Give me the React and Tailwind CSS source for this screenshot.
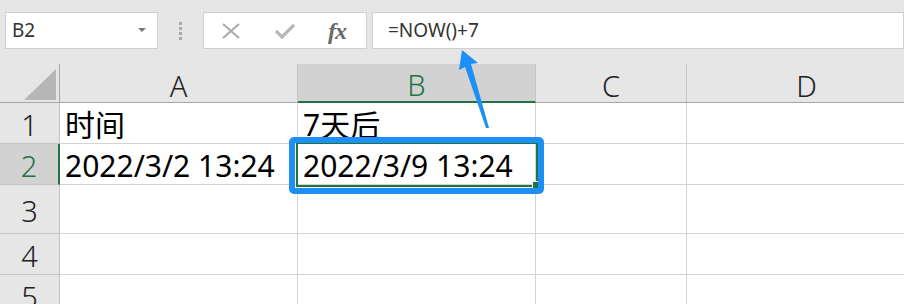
import React from "react";

export default function App() {
  const rowHeights = [41, 41, 49, 41, 41];
  const cols = [
    { name: "A", w: 238 },
    { name: "B", w: 238 },
    { name: "C", w: 151 },
    { name: "D", w: 240 },
  ];
  const data = {
    "0-0": "时间",
    "0-1": "7天后",
    "1-0": "2022/3/2 13:24",
    "1-1": "2022/3/9 13:24",
  };
  return (
    <div className="relative w-[904px] h-[304px] overflow-hidden bg-white font-['Noto_Sans','Noto_Sans_CJK_SC',sans-serif]">
      {/* toolbar */}
      <div className="h-[64px] bg-[#e6e6e6] flex items-start pt-[12px]">
        <div className="ml-[5px] w-[153px] h-[37px] bg-white border border-[#cfcfcf] flex items-center justify-between pl-[6px] pr-[11px]">
          <span className="text-[19px] leading-none text-[#333]">B2</span>
          <svg width="8" height="5" viewBox="0 0 8 5"><path d="M0 0H8L4 4Z" fill="#777" /></svg>
        </div>
        <div className="w-[45px] h-[37px] flex flex-col items-center justify-center gap-[2px]">
          <div className="w-[3px] h-[3px] bg-[#a8a8a8]" />
          <div className="w-[3px] h-[3px] bg-[#a8a8a8]" />
          <div className="w-[3px] h-[3px] bg-[#a8a8a8]" />
          <div className="w-[3px] h-[3px] bg-[#a8a8a8]" />
        </div>
        <div className="w-[164px] h-[37px] bg-white border border-[#cfcfcf] flex items-center">
          <svg className="ml-[18px]" width="18" height="16" viewBox="0 0 18 16">
            <path d="M1 1L17 15M17 1L1 15" stroke="#a9a9a9" strokeWidth="2" />
          </svg>
          <svg className="ml-[35px]" width="20" height="16" viewBox="0 0 20 16">
            <path d="M1 8L7 14L19 2" stroke="#b7b7b7" strokeWidth="3.2" fill="none" />
          </svg>
          <span className="ml-[33px] text-[24px] leading-none italic font-bold text-[#6a6a6a] font-['Liberation_Serif',serif] tracking-[-1px]">fx</span>
        </div>
        <div className="ml-[5px] flex-1 h-[37px] bg-white border border-[#cfcfcf] flex items-center pl-[15px]">
          <span className="text-[19px] leading-none text-[#333]">=NOW()+7</span>
        </div>
      </div>

      {/* grid */}
      <div className="flex flex-col">
        {/* header row */}
        <div className="flex h-[39px] bg-[#e6e6e6] border-b border-[#a6a6a6]">
          <div className="w-[60px] shrink-0 border-r border-[#a6a6a6] relative">
            <svg className="absolute left-[24px] top-[5px]" width="32" height="32" viewBox="0 0 32 32">
              <path d="M0 31H32V0Z" fill="#b6b6b6" />
            </svg>
          </div>
          {cols.map((c) => (
            <div
              key={c.name}
              style={{ width: c.w }}
              className={
                c.name === "B"
                  ? "shrink-0 bg-[#d2d2d2] border-r border-[#c4c4c4] border-b-[2px] border-b-[#217346] -mb-[1px] flex items-center justify-center pt-[4px] text-[29px] leading-none text-[#217346] font-light"
                  : "shrink-0 border-r border-[#c4c4c4] flex items-center justify-center pt-[4px] text-[29px] leading-none text-[#222] font-light"
              }
            >
              {c.name}
            </div>
          ))}
        </div>
        {rowHeights.map((h, r) => (
          <div key={r} className="flex" style={{ height: h }}>
            <div
              className={
                r === 1
                  ? "w-[60px] shrink-0 bg-[#d2d2d2] border-r-[2px] border-r-[#217346] border-b border-[#c4c4c4] flex items-center justify-center pt-[2px] text-[29px] leading-none text-[#217346] font-light"
                  : "w-[60px] shrink-0 bg-[#e6e6e6] border-r border-[#a6a6a6] border-b border-[#c4c4c4] flex items-center justify-center pt-[2px] text-[29px] leading-none text-[#222] font-light"
              }
            >
              {r + 1}
            </div>
            {cols.map((c, ci) => (
              <div
                key={c.name}
                style={{ width: c.w }}
                className="shrink-0 border-r border-b border-[#d4d4d4] flex items-end pl-[5px] pb-[3px] text-[30px] leading-none text-black whitespace-nowrap overflow-visible"
              >
                {data[`${r}-${ci}`] || ""}
              </div>
            ))}
          </div>
        ))}
      </div>

      {/* Excel active cell border */}
      <div className="absolute left-[296px] top-[142px] w-[242px] h-[45px] border-[2px] border-[#217346]" />
      <div className="absolute left-[532px] top-[181px] w-[8px] h-[8px] bg-[#217346] border border-white" />

      {/* blue annotation box */}
      <div className="absolute left-[289px] top-[137px] w-[255px] h-[57px] border-[6px] border-[#1e8ff5] rounded-[5px]" />

      {/* arrow */}
      <svg className="absolute left-0 top-0" width="904" height="304" viewBox="0 0 904 304">
        <path d="M462 50 L478 63 L471 64 L489 128 L486 128 L465 67 L459 70 Z" fill="#1e8ff5" />
      </svg>
    </div>
  );
}
